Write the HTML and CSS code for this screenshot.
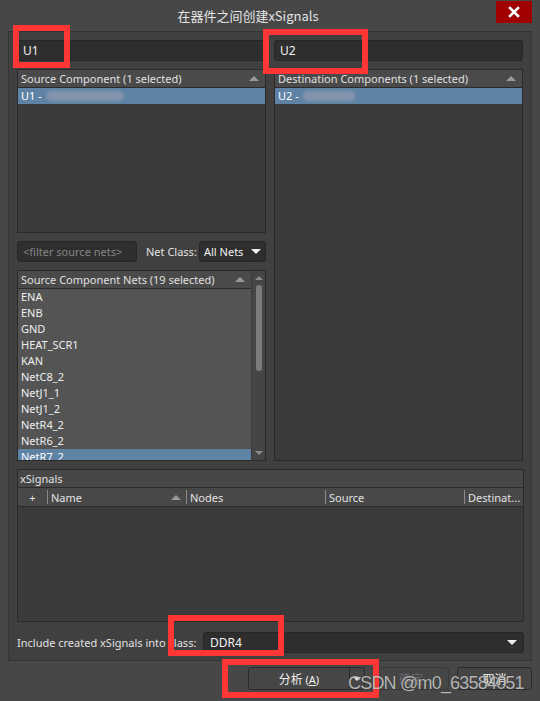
FILE: index.html
```html
<!DOCTYPE html>
<html>
<head>
<meta charset="utf-8">
<link rel="stylesheet" href="styles.css">
</head>
<body>
<div class="window">
  <div class="titlebar">
    <div class="title">在器件之间创建xSignals</div>
    <div class="close"><svg width="12" height="12" viewBox="0 0 12 12"><path d="M2 2 L10 10 M10 2 L2 10" stroke="#fff" stroke-width="2.6" stroke-linecap="square"/></svg></div>
  </div>
  <div class="panel">
    <div class="top">
      <div class="col">
        <div class="field">U1</div>
        <div class="list src">
          <div class="lhead"><span>Source Component (1 selected)</span><i class="sort"></i></div>
          <div class="row sel">U1 - <span class="blur b1"></span></div>
        </div>
        <div class="filterrow">
          <div class="field ph">&lt;filter source nets&gt;</div>
          <span class="lbl">Net Class:</span>
          <div class="combo small"><span>All Nets</span><i class="caret"></i></div>
        </div>
        <div class="list nets">
          <div class="netsbody">
            <div class="lhead"><span>Source Component Nets (19 selected)</span><i class="sort"></i></div>
            <div class="rows">
              <div class="row">ENA</div>
              <div class="row">ENB</div>
              <div class="row">GND</div>
              <div class="row">HEAT_SCR1</div>
              <div class="row">KAN</div>
              <div class="row">NetC8_2</div>
              <div class="row">NetJ1_1</div>
              <div class="row">NetJ1_2</div>
              <div class="row">NetR4_2</div>
              <div class="row">NetR6_2</div>
              <div class="row sel">NetR7_2</div>
            </div>
          </div>
          <div class="vscroll">
            <i class="arr up"></i>
            <div class="track"><div class="thumb"></div></div>
            <i class="arr down"></i>
          </div>
        </div>
      </div>
      <div class="col">
        <div class="field">U2</div>
        <div class="list dest">
          <div class="lhead"><span>Destination Components (1 selected)</span><i class="sort"></i></div>
          <div class="row sel">U2 - <span class="blur b2"></span></div>
        </div>
      </div>
    </div>
    <div class="xsig">
      <div class="xhead">xSignals</div>
      <div class="cols">
        <div class="c c0">+</div>
        <div class="c c1"><span>Name</span><i class="sort"></i></div>
        <div class="c c2">Nodes</div>
        <div class="c c3">Source</div>
        <div class="c c4">Destinat...</div>
      </div>
    </div>
    <div class="include">
      <span class="lbl">Include created xSignals into class:</span>
      <div class="combo wide"><span>DDR4</span><i class="caret"></i></div>
    </div>
  </div>
  <div class="buttons">
    <div class="btn split"><span class="btxt">分析 <span class="acc">(<u>A</u>)</span></span><span class="sp"><i class="caret"></i></span></div>
    <div class="btn dis">确定</div>
    <div class="btn cancel">取消</div>
  </div>
  <div class="mark m1"></div>
  <div class="mark m2"></div>
  <div class="mark m3"></div>
  <div class="mark m4"></div>
  <div class="wm">CSDN @m0_63584051</div>
</div>
</body>
</html>
```
FILE: styles.css
```css
* { box-sizing: border-box; }
html, body { margin: 0; padding: 0; }
body {
  background: #474747;
  font-family: "Noto Sans", "Open Sans", sans-serif;
  font-size: 11px;
  color: #e2e2e2;
  width: 540px;
  height: 701px;
  overflow: hidden;
}
.window {
  position: relative;
  width: 540px;
  height: 701px;
  background: #474747;
}
.titlebar {
  height: 31px;
  display: flex;
  align-items: flex-start;
}
.title {
  flex: 1;
  text-align: center;
  font-family: "Noto Sans CJK SC", sans-serif;
  font-size: 13px;
  line-height: 31px;
  color: #e4e4e4;
}
.close {
  width: 36px;
  height: 22px;
  margin-top: 1px;
  margin-right: 8px;
  background: #a00000;
  display: flex;
  align-items: center;
  justify-content: center;
}
.close svg { display: block; }
.panel {
  margin: 0 8px;
  height: 630px;
  border: 1px solid #353535;
  background: #404040;
  padding: 8px 7px 8px 8px;
}
.top {
  display: grid;
  grid-template-columns: 249px 249px;
  column-gap: 8px;
}
.col { display: flex; flex-direction: column; }
.field {
  height: 21px;
  background: #2e2e2e;
  border: 1px solid #262626;
  border-radius: 3px;
  padding-left: 5px;
  line-height: 19px;
  font-size: 12px;
  color: #f0f0f0;
  white-space: nowrap;
}
.field.ph { width: 120px; color: #858585; font-size: 11px; }
.list {
  margin-top: 8px;
  border: 1px solid #2a2a2a;
  background: #3b3b3b;
}
.list.src { height: 164px; }
.list.dest { height: 392px; }
.list.nets { height: 191px; display: flex; background: #434343; }
.lhead {
  height: 18px;
  background: #4a4a4a;
  border-bottom: 1px solid #2b2b2b;
  display: flex;
  align-items: center;
  justify-content: space-between;
  padding: 0 6px 0 3px;
  color: #e0e0e0;
  white-space: nowrap;
}
.sort {
  width: 0; height: 0;
  border-left: 5px solid transparent;
  border-right: 5px solid transparent;
  border-bottom: 5px solid #9a9a9a;
}
.row {
  height: 16px;
  line-height: 16px;
  padding-left: 3px;
  color: #eeeeee;
  white-space: nowrap;
}
.row.sel { background: #5e83a5; color: #ffffff; }
.blur {
  display: inline-block;
  vertical-align: middle;
  height: 10px;
  border-radius: 5px;
  background: #8395ad;
  filter: blur(1.8px);
  margin-top: -2px;
}
.b1 { width: 78px; margin-left: 1px; }
.b2 { width: 52px; margin-left: 1px; }
.netsbody { flex: 1; display: flex; flex-direction: column; min-width: 0; }
.rows { flex: 1; background: #545454; overflow: hidden; }
.vscroll {
  width: 14px;
  background: #454545;
  display: flex;
  flex-direction: column;
  align-items: center;
  border-left: 1px solid #3a3a3a;
}
.arr {
  width: 0; height: 0;
  border-left: 4px solid transparent;
  border-right: 4px solid transparent;
  margin: 5px 0 3px;
}
.arr.up { border-bottom: 4px solid #8e8e8e; }
.arr.down { border-top: 4px solid #8e8e8e; margin: 3px 0 5px; }
.track { flex: 1; width: 100%; display: flex; justify-content: center; }
.thumb {
  width: 6px;
  height: 86px;
  margin-top: 2px;
  background: #7c7c7c;
  border-radius: 3px;
}
.filterrow {
  margin-top: 8px;
  height: 21px;
  display: flex;
  align-items: center;
}
.lbl { white-space: nowrap; color: #e0e0e0; font-size: 11px; }
.filterrow .lbl { margin-left: 9px; }
.combo {
  height: 21px;
  background: #2e2e2e;
  border: 1px solid #262626;
  border-radius: 3px;
  display: flex;
  align-items: center;
  justify-content: space-between;
  padding: 0 6px 0 5px;
  font-size: 12px;
  color: #f2f2f2;
  white-space: nowrap;
}
.combo.small { margin-left: auto; width: 67px; font-size: 11px; padding-left: 4px; padding-right: 4px; }
.caret {
  width: 0; height: 0;
  border-left: 5px solid transparent;
  border-right: 5px solid transparent;
  border-top: 5px solid #f0f0f0;
}
.xsig {
  margin-top: 8px;
  height: 153px;
  border: 1px solid #2a2a2a;
  background: #3b3b3b;
}
.xhead {
  height: 18px;
  line-height: 17px;
  background: #474747;
  border-bottom: 1px solid #2b2b2b;
  padding-left: 2px;
  color: #e2e2e2;
}
.cols {
  height: 19px;
  display: flex;
  background: #484848;
  border-bottom: 1px solid #2b2b2b;
  color: #e2e2e2;
}
.c {
  display: flex;
  align-items: center;
  padding-left: 3px;
  border-right: 1px solid #8a8a8a;
  margin: 2px 0;
  white-space: nowrap;
  overflow: hidden;
}
.c0 { width: 30px; justify-content: center; padding-left: 0; }
.c1 { width: 139px; justify-content: space-between; padding-right: 5px; }
.c2 { width: 139px; }
.c3 { width: 139px; }
.c4 { flex: 1; border-right: none; }
.include {
  margin-top: 10px;
  height: 21px;
  display: flex;
  align-items: center;
}
.combo.wide { margin-left: auto; width: 321px; padding-left: 6px; }
.buttons {
  margin-top: 6px;
  height: 24px;
  display: flex;
  justify-content: flex-end;
  padding-right: 8px;
  gap: 8px;
}
.btn {
  height: 23px;
  border: 1px solid #2b2b2b;
  border-radius: 3px;
  background: #464646;
  display: flex;
  align-items: center;
  justify-content: center;
  font-family: "Noto Sans CJK SC", sans-serif;
  font-size: 12px;
  color: #f0f0f0;
}
.btn.split { width: 117px; justify-content: space-between; padding: 0; }
.btxt { flex: 1; text-align: center; }
.acc { font-family: "Noto Sans", sans-serif; font-size: 11px; }
.sp {
  width: 15px;
  height: 100%;
  border-left: 1px solid #2b2b2b;
  display: flex;
  align-items: center;
  justify-content: center;
}
.sp .caret { border-left-width: 4px; border-right-width: 4px; border-top-width: 4px; }
.btn.dis { width: 76px; color: #6a6a6a; border-color: #3a3a3a; }
.btn.cancel { width: 75px; }
.mark {
  position: absolute;
  border: 6px solid #ff3636;
}
.m1 { left: 13px; top: 25px; width: 57px; height: 43px; }
.m2 { left: 263px; top: 29px; width: 105px; height: 45px; }
.m3 { left: 168px; top: 615px; width: 116px; height: 41px; }
.m4 { left: 222px; top: 659px; width: 157px; height: 39px; }
.wm {
  position: absolute;
  left: 348px;
  top: 674px;
  font-family: "Liberation Sans", Arial, sans-serif;
  font-size: 18px;
  line-height: 18px;
  letter-spacing: -0.8px;
  color: rgba(225, 225, 225, 0.78);
  text-shadow: 0 0 1px rgba(0,0,0,0.6);
  white-space: nowrap;
}
```
